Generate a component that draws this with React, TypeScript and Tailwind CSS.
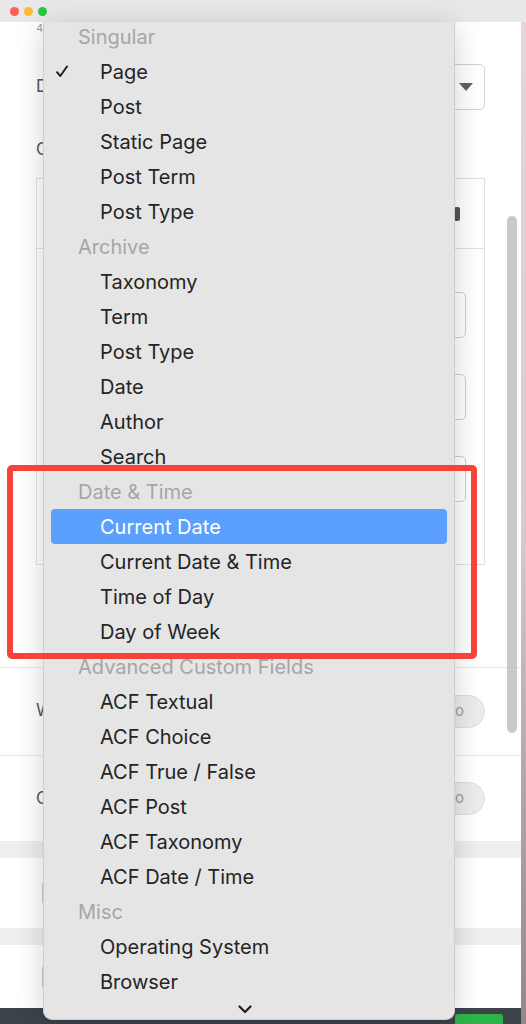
import { ReactNode } from "react";

type Entry = { label: string; header?: boolean; checked?: boolean; active?: boolean };

const entries: Entry[] = [
  { label: "Singular", header: true },
  { label: "Page", checked: true },
  { label: "Post" },
  { label: "Static Page" },
  { label: "Post Term" },
  { label: "Post Type" },
  { label: "Archive", header: true },
  { label: "Taxonomy" },
  { label: "Term" },
  { label: "Post Type" },
  { label: "Date" },
  { label: "Author" },
  { label: "Search" },
  { label: "Date & Time", header: true },
  { label: "Current Date", active: true },
  { label: "Current Date & Time" },
  { label: "Time of Day" },
  { label: "Day of Week" },
  { label: "Advanced Custom Fields", header: true },
  { label: "ACF Textual" },
  { label: "ACF Choice" },
  { label: "ACF True / False" },
  { label: "ACF Post" },
  { label: "ACF Taxonomy" },
  { label: "ACF Date / Time" },
  { label: "Misc", header: true },
  { label: "Operating System" },
  { label: "Browser" },
];

const Toggle = () => (
  <div className="w-[90px] h-[33px] rounded-full bg-[#ececee] border border-[#dcdde0] flex items-center justify-end pr-[20px] text-[15px] text-[#9aa0a6]">
    No
  </div>
);

const Row = ({ label, h, children }: { label: string; h: string; children?: ReactNode }) => (
  <div className={`${h} border-t border-[#e2e4e7] flex items-center justify-between pl-[36px] pr-[36px]`}>
    <span className="text-[17px] text-[#50575e]">{label}</span>
    {children}
  </div>
);

const MenuItem = ({ e }: { e: Entry }) => {
  if (e.header) {
    return (
      <div className="h-[35px] flex items-center pl-[34px] text-[#a6a6a6]">{e.label}</div>
    );
  }
  return (
    <div
      className={`h-[35px] mx-[7px] flex items-center rounded-[4px] relative ${
        e.active ? "bg-[#5aa0fc] text-white" : "text-[#242424]"
      }`}
    >
      {e.checked && (
        <svg className="absolute left-[5px] top-[11px]" width="12" height="13" viewBox="0 0 12 13" fill="none">
          <path d="M1 7.2 L4.3 11 L11 1.5" stroke="#242424" strokeWidth="2" strokeLinecap="round" strokeLinejoin="round" />
        </svg>
      )}
      <span className="pl-[49px]">{e.label}</span>
    </div>
  );
};

export default function App() {
  return (
    <div
      className="w-[526px] h-[1024px] relative overflow-hidden bg-white"
      style={{ fontFamily: "Inter, 'Liberation Sans', sans-serif" }}
    >
      {/* title bar */}
      <div className="h-[22px] bg-[#e8e8e8] flex items-center gap-[5px] pl-[10px]">
        <span className="w-[9px] h-[9px] rounded-full bg-[#fe5f57]" />
        <span className="w-[9px] h-[9px] rounded-full bg-[#febc2e]" />
        <span className="w-[9px] h-[9px] rounded-full bg-[#28c840]" />
      </div>

      <div className="flex">
        {/* background settings page */}
        <div className="w-[521px] h-[1002px] flex flex-col">
          <div className="h-[646px] pl-[36px] pr-[36px] flex flex-col">
            <div className="h-[14px] text-[11px] leading-[12px] text-[#9aa0a6]">4</div>
            <div className="flex items-center justify-between mt-[28px] h-[46px]">
              <span className="text-[17px] text-[#50575e]">Display</span>
              <div className="w-[320px] h-[46px] border border-[#cdd0d4] rounded-[5px] flex items-center justify-end pr-[11px]">
                <svg width="14" height="8" viewBox="0 0 14 8">
                  <path d="M0 0 H14 L7 8 Z" fill="#5c6268" />
                </svg>
              </div>
            </div>
            <div className="mt-[27px] text-[17px] text-[#50575e] leading-[24px]">Conditions</div>
            <div className="mt-[17px] h-[387px] border border-[#dde1e5] flex flex-col">
              <div className="h-[70px] border-b border-[#dde1e5] flex items-center justify-end pr-[24px]">
                <span className="w-[6px] h-[14px] rounded-[2px] bg-[#50575e]" />
              </div>
              <div className="flex flex-col items-end pr-[18px] pt-[43px] gap-[36px]">
                <div className="w-[300px] h-[46px] border border-[#cdd0d4] rounded-[5px]" />
                <div className="w-[300px] h-[46px] border border-[#cdd0d4] rounded-[5px]" />
                <div className="w-[300px] h-[46px] border border-[#cdd0d4] rounded-[5px]" />
              </div>
            </div>
          </div>
          <Row label="Wrapper" h="h-[88px]">
            <Toggle />
          </Row>
          <Row label="Cache" h="h-[87px]">
            <Toggle />
          </Row>
          <div className="h-[17px] bg-[#eceef0]" />
          <div className="h-[70px] flex items-center pl-[42px]">
            <span className="w-[2px] h-[20px] bg-[#c9ccd0]" />
          </div>
          <div className="h-[17px] bg-[#eceef0]" />
          <div className="h-[63px] flex items-center pl-[42px]">
            <span className="w-[2px] h-[20px] bg-[#c9ccd0]" />
          </div>
          <div className="flex-1 bg-[#3c434a] flex justify-end pr-[18px] pt-[6px]">
            <span className="w-[48px] h-[10px] rounded-t-[3px] bg-[#2fb44a]" />
          </div>
        </div>
        <div className="w-[5px] h-[1002px] bg-gradient-to-b from-[#e6d6d8] via-[#d9cacc] to-[#948789]" />
      </div>

      {/* overlay scrollbar */}
      <div className="absolute left-[507px] top-[216px] w-[10px] h-[517px] rounded-full bg-[#c9c9c9]" />

      {/* popup menu */}
      <div className="absolute left-[43px] top-[22px] w-[412px] h-[998px] bg-[#e5e5e5] border-x border-b border-[#cfcfcf] rounded-b-[9px] shadow-[0_4px_28px_rgba(0,0,0,0.18)] overflow-hidden text-[20px]">
        <div className="-mt-[3px] flex flex-col">
          {entries.map((e, i) => (
            <MenuItem key={i} e={e} />
          ))}
        </div>
        <div className="flex justify-center pt-[6px] pr-[8px]">
          <svg width="14" height="9" viewBox="0 0 14 9" fill="none">
            <path d="M1.5 1.5 L7 7 L12.5 1.5" stroke="#1e1e1e" strokeWidth="2.2" strokeLinecap="round" strokeLinejoin="round" />
          </svg>
        </div>
      </div>

      {/* annotation */}
      <div className="absolute left-[7px] top-[465px] w-[470px] h-[194px] border-[6px] border-[#f5423a] rounded-[5px]" />
    </div>
  );
}
